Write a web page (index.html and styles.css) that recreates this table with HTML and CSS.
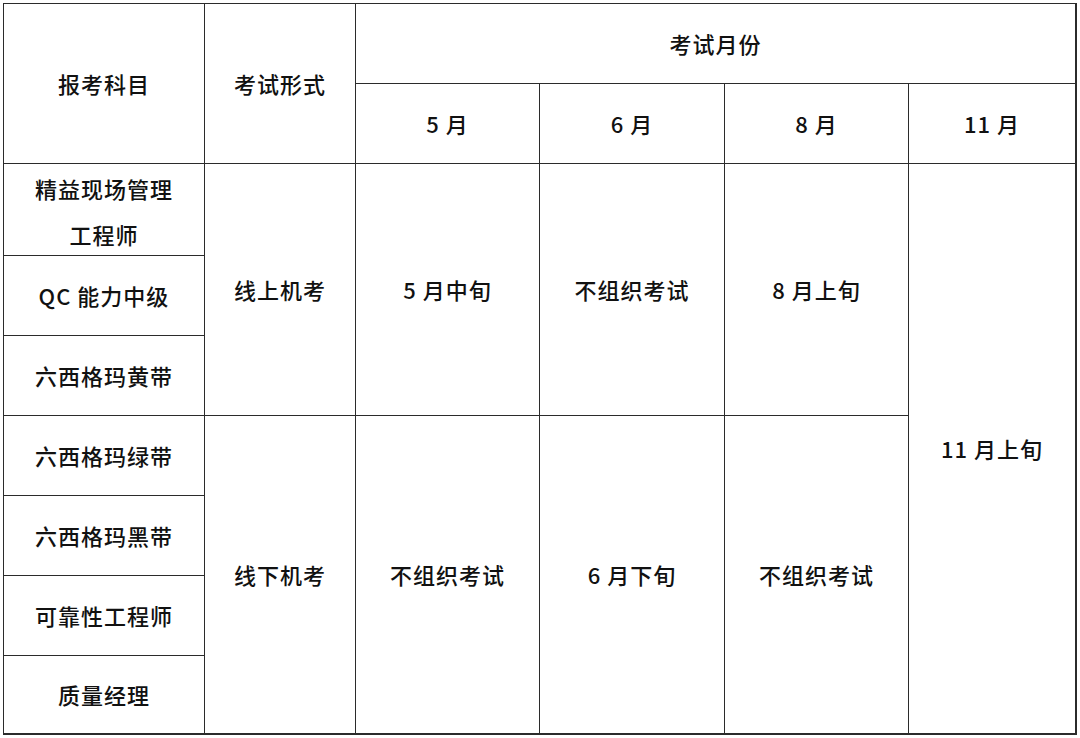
FILE: index.html
```html
<!DOCTYPE html>
<html lang="zh">
<head>
<meta charset="utf-8">
<link rel="stylesheet" href="styles.css">
</head>
<body>
<div class="grid">
  <div class="cell c1 r1-3">报考科目</div>
  <div class="cell c2 r1-3">考试形式</div>
  <div class="cell c3-7 r1 last-col">考试月份</div>
  <div class="cell c3 r2">5 月</div>
  <div class="cell c4 r2">6 月</div>
  <div class="cell c5 r2">8 月</div>
  <div class="cell c6 r2 last-col">11 月</div>

  <div class="cell c1 r3 two-line">精益现场管理<br>工程师</div>
  <div class="cell c1 r4">QC 能力中级</div>
  <div class="cell c1 r5">六西格玛黄带</div>
  <div class="cell c1 r6">六西格玛绿带</div>
  <div class="cell c1 r7">六西格玛黑带</div>
  <div class="cell c1 r8">可靠性工程师</div>
  <div class="cell c1 r9 last-row">质量经理</div>

  <div class="cell c2 r3-6">线上机考</div>
  <div class="cell c2 r6-10 last-row">线下机考</div>

  <div class="cell c3 r3-6">5 月中旬</div>
  <div class="cell c4 r3-6">不组织考试</div>
  <div class="cell c5 r3-6">8 月上旬</div>

  <div class="cell c3 r6-10 last-row">不组织考试</div>
  <div class="cell c4 r6-10 last-row">6 月下旬</div>
  <div class="cell c5 r6-10 last-row">不组织考试</div>

  <div class="cell c6 r3-10 last-col last-row">11 月上旬</div>
</div>
</body>
</html>
```

FILE: styles.css
```css
html, body {
  margin: 0;
  padding: 0;
  background: #ffffff;
}

body {
  padding: 3px 0 0 3px;
  font-family: "Noto Sans CJK SC", "Noto Sans", sans-serif;
  color: #111111;
}

.grid {
  display: grid;
  grid-template-columns: 201px 151px 184px 185px 184px 168px;
  grid-template-rows: 80px 80px 92px 80px 80px 80px 80px 80px 79px;
  width: 1073px;
  border-left: 1px solid #2b2b2b;
  border-top: 1px solid #2b2b2b;
}

.cell {
  box-sizing: border-box;
  border-right: 1px solid #2b2b2b;
  border-bottom: 1px solid #2b2b2b;
  display: flex;
  align-items: center;
  justify-content: center;
  text-align: center;
  font-size: 22px;
  font-weight: 500;
  letter-spacing: 1px;
  line-height: 30px;
  padding-bottom: 2px;
}

.two-line {
  line-height: 46px;
  padding-top: 3px;
  padding-bottom: 0;
}

.last-col { border-right-width: 2px; }
.last-row { border-bottom-width: 2px; }

.c1 { grid-column: 1; }
.c2 { grid-column: 2; }
.c3 { grid-column: 3; }
.c4 { grid-column: 4; }
.c5 { grid-column: 5; }
.c6 { grid-column: 6; }
.c3-7 { grid-column: 3 / 7; }

.r1 { grid-row: 1; }
.r2 { grid-row: 2; }
.r3 { grid-row: 3; }
.r4 { grid-row: 4; }
.r5 { grid-row: 5; }
.r6 { grid-row: 6; }
.r7 { grid-row: 7; }
.r8 { grid-row: 8; }
.r9 { grid-row: 9; }
.r1-3 { grid-row: 1 / 3; }
.r3-6 { grid-row: 3 / 6; }
.r6-10 { grid-row: 6 / 10; }
.r3-10 { grid-row: 3 / 10; }
```
